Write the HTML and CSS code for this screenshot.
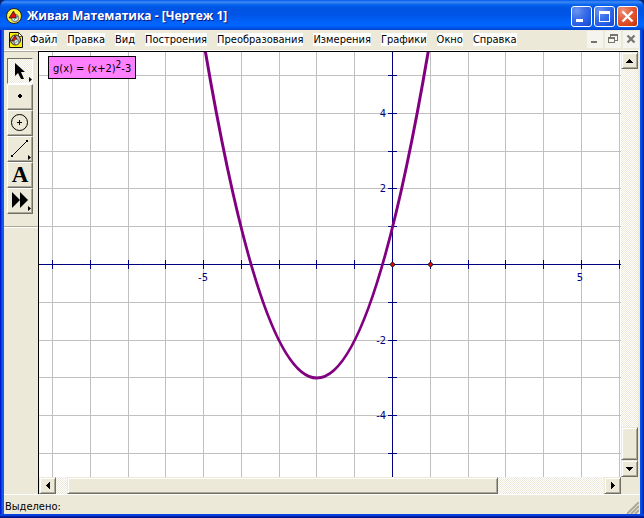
FILE: index.html
```html
<!DOCTYPE html>
<html lang="ru">
<head>
<meta charset="utf-8">
<title>Живая Математика - [Чертеж 1]</title>
<link rel="stylesheet" href="styles.css">
</head>
<body>
<div class="window">
  <header class="titlebar">
    <svg class="app-icon" width="16" height="16" viewBox="0 0 16 16" aria-hidden="true">
      <circle cx="8" cy="8" r="7.5" fill="#fff23a" stroke="#222"/>
      <circle cx="9" cy="10" r="3.500" fill="#fff" stroke="#888" stroke-width="1.500"/>
      <path d="M3 10L7.500 3L11 10Z" fill="#e01010" stroke="#111" stroke-width=".7"/>
      <path d="M8 12L12 8" stroke="#2a8" stroke-width="1"/>
    </svg>
    <h1 class="title">Живая Математика - [Чертеж 1]</h1>
    <div class="controls">
      <button class="control" aria-label="Свернуть"><svg width="19" height="19"><path d="M4 12h7v3h-7z" fill="#fff"/></svg></button>
      <button class="control" aria-label="Развернуть"><svg width="19" height="19"><path d="M4 4h11v11h-11zM5 7v7h9v-7z" fill="#fff" fill-rule="evenodd"/></svg></button>
      <button class="control close" aria-label="Закрыть"><svg width="19" height="19"><path d="M4.500 4.500L14.500 14.500M14.500 4.500L4.500 14.500" stroke="#fff" stroke-width="2.400"/></svg></button>
    </div>
  </header>
  <div class="client">
    <nav class="menubar">
      <svg class="doc-icon" width="16" height="18" viewBox="0 0 16 18" aria-hidden="true">
        <path d="M1.500 1.500h9l4 4v11h-13z" fill="#fff200" stroke="#111"/>
        <path d="M10.500 1.500v4h4z" fill="#fff" stroke="#111" stroke-width=".7"/>
        <circle cx="7.500" cy="9" r="5" fill="#bbb" stroke="#222"/>
        <path d="M3.500 10L7 4.500L10 10Z" fill="#e01010" stroke="#111" stroke-width=".6"/>
        <circle cx="8.500" cy="11" r="2.500" fill="#eee" stroke="#666"/>
        <path d="M7.500 12L10 9.500" stroke="#2a8"/>
      </svg>
      <a href="#">Файл</a><a href="#">Правка</a><a href="#">Вид</a><a href="#">Построения</a><a href="#">Преобразования</a><a href="#">Измерения</a><a href="#">Графики</a><a href="#">Окно</a><a href="#">Справка</a>
      <div class="doc-controls">
        <button aria-label="Свернуть чертеж"><svg width="16" height="17"><path d="M4 10h6v2h-6z" fill="#77766d"/></svg></button>
        <button aria-label="Восстановить чертеж"><svg width="16" height="17"><path d="M5 3h8v7h-3v-1h2v-4h-6v1h-1zM3 6h7v6h-7zM4 8v3h5v-3z" fill="#77766d" fill-rule="evenodd"/></svg></button>
        <button aria-label="Закрыть чертеж"><svg width="16" height="17"><path d="M4.500 4.500L11.500 11.500M11.500 4.500L4.500 11.500" stroke="#77766d" stroke-width="2.200"/></svg></button>
      </div>
    </nav>
    <main class="workspace">
      <div class="toolbox">
        <button class="tool active" aria-label="Стрелка"><svg width="24" height="24"><path d="M7 4v13l3-3l3 6h3l-3-7h4z"/><path d="M21 18v5l3-2.500z"/></svg></button>
        <button class="tool" aria-label="Точка"><svg width="24" height="24"><path d="M11 9h2v1h1v2h-1v1h-2v-1h-1v-2h1z"/></svg></button>
        <button class="tool" aria-label="Окружность"><svg width="24" height="24"><circle cx="11.500" cy="11.500" r="8" fill="none" stroke="#000"/><path d="M9 11h5v1h-5zM11 9h1v5h-1z"/></svg></button>
        <button class="tool" aria-label="Отрезок"><svg width="24" height="24"><path d="M4 19L19 4" stroke="#000"/><path d="M3 18h2v2h-2zM18 3h2v2h-2zM20 18v5l3-2.500z"/></svg></button>
        <button class="tool letter" aria-label="Текст">A</button>
        <button class="tool" aria-label="Инструменты"><svg width="24" height="24"><path d="M4 3v16l8-8zM12 3v16l8-8zM20 17v5l3-2.500z"/></svg></button>
      </div>
      <div class="document">
        <div class="sketch">
          <svg class="plot" width="100%" height="100%" role="img" aria-label="График параболы">
            <path class="grid" d="M13.500 0V1000M51.500 0V1000M89.500 0V1000M126.500 0V1000M164.500 0V1000M202.500 0V1000M240.500 0V1000M277.500 0V1000M315.500 0V1000M391.500 0V1000M429.500 0V1000M466.500 0V1000M504.500 0V1000M542.500 0V1000M580.500 0V1000M0 23.500H2000M0 61.500H2000M0 99.500H2000M0 136.500H2000M0 174.500H2000M0 250.500H2000M0 288.500H2000M0 325.500H2000M0 363.500H2000M0 401.500H2000"/>
            <path class="axis" d="M353.500 0V1000M0 212.500H2000M13.500 208v9M51.500 208v9M89.500 208v9M126.500 208v9M164.500 208v9M202.500 208v9M240.500 208v9M277.500 208v9M315.500 208v9M391.500 208v9M429.500 208v9M466.500 208v9M504.500 208v9M542.500 208v9M580.500 208v9M349 23.500h9M349 61.500h9M349 99.500h9M349 136.500h9M349 174.500h9M349 250.500h9M349 288.500h9M349 325.500h9M349 363.500h9M349 401.500h9"/>
            <path class="curve" d="M164 -14.500Q277.800 666.500 391.600 -14.500"/>
            <circle class="point" cx="353.500" cy="212.500" r="2"/>
            <circle class="point" cx="391.500" cy="212.500" r="2"/>
            <g class="scale">
              <text x="164" y="229" text-anchor="middle">-5</text>
              <text x="541" y="229" text-anchor="middle">5</text>
              <text x="347" y="65" text-anchor="end">4</text>
              <text x="347" y="140" text-anchor="end">2</text>
              <text x="347" y="292" text-anchor="end">-2</text>
              <text x="347" y="367" text-anchor="end">-4</text>
            </g>
          </svg>
          <div class="formula">g(x) = (x+2)<sup>2</sup>-3</div>
        </div>
        <div class="scroll vertical">
          <button aria-label="Вверх"><svg width="7" height="4"><path d="M3 0h1v1h1v1h1v1h1v1h-7v-1h1v-1h1v-1h1z"/></svg></button>
          <span class="thumb"></span>
          <button aria-label="Вниз"><svg width="7" height="4"><path d="M0 0h7v1h-1v1h-1v1h-1v1h-1v-1h-1v-1h-1v-1h-1z"/></svg></button>
        </div>
        <div class="scroll horizontal">
          <button aria-label="Влево"><svg width="4" height="7"><path d="M0 3h1v-1h1v-1h1v-1h1v7h-1v-1h-1v-1h-1v-1h-1z"/></svg></button>
          <span class="thumb"></span>
          <button aria-label="Вправо"><svg width="4" height="7"><path d="M0 0h1v1h1v1h1v1h1v1h-1v1h-1v1h-1v1h-1z"/></svg></button>
        </div>
      </div>
    </main>
    <footer class="status">Выделено:
      <svg class="grip" width="12" height="12"><path d="M0 12L12 0M4 12L12 4M8 12L12 8" stroke="#aca899" stroke-width="2"/></svg>
    </footer>
  </div>
</div>
</body>
</html>
```
FILE: styles.css
```css
* { box-sizing: border-box; }
body { margin: 0; background: #0a246a; font: 11px/13px "DejaVu Sans Condensed", "Noto Sans", sans-serif; color: #000; }
button { padding: 0; border: 0; font: inherit; color: inherit; }
svg { display: block; }
.window {
  display: flex; flex-direction: column; height: 100vh;
  padding: 0 4px 4px; border-radius: 7px 7px 0 0;
  background: linear-gradient(90deg, #0019cf 0, #0019cf 1px, #0831d9 1px, #166aee 3px, #0855dd 4px, #0855dd calc(100% - 4px), #0450e8 calc(100% - 3px), #0030c8 calc(100% - 1px), #00138c 100%);
  box-shadow: inset 0 -1px #00138c, inset 0 -2px #001ea0, inset 0 -4px #0842dd;
}
.titlebar {
  display: flex; align-items: center; flex: none; height: 30px;
  margin: 0 -4px; padding: 2px 6px 0; border-radius: 7px 7px 0 0;
  background: linear-gradient(#0058ee 0, #3f8cf3 2px, #2a79f0 3px, #0262ee 5px, #0054e4 8px, #0055e6 15px, #0060f8 21px, #0066ff 25px, #005bf0 27px, #0043cf 30px);
}
.title { flex: 1; margin: 0 0 0 5px; font: bold 12px/16px "Open Sans", "Noto Sans", sans-serif; color: #fff; text-shadow: 1px 1px #0a1883; white-space: nowrap; }
.controls { display: flex; gap: 2px; }
.control {
  width: 21px; height: 21px; border: 1px solid #fff; border-radius: 3px;
  background: radial-gradient(circle at 25% 20%, #6b95f0, #3b6fe8 40%, #2158e4 75%, #1643c0);
}
.control.close { background: radial-gradient(circle at 25% 20%, #ec9478, #e35f3f 40%, #da4419 75%, #b3300d); }
.client { display: flex; flex-direction: column; flex: 1; min-height: 0; background: #ece9d8; }
.menubar { display: flex; align-items: center; gap: 10px; flex: none; height: 20px; padding: 0 1px 1px 4px; }
.menubar a { background: #fff; color: #000; text-decoration: none; white-space: nowrap; }
.doc-icon { margin-right: -4px; }
.doc-controls { display: flex; gap: 2px; margin-left: auto; }
.doc-controls button { width: 16px; height: 17px; background: #f5f4ee; }
.workspace { display: flex; flex: 1; min-height: 0; border-top: 1px solid #fff; }
.toolbox { flex: none; width: 34px; padding: 6px 3px 0; border-top: 1px solid #aca899; background: linear-gradient(#aca899, #aca899) 0 174px / 34px 1px no-repeat, linear-gradient(#fff, #fff) 0 175px / 34px 1px no-repeat; }
.tool { display: block; width: 26px; height: 26px; border: 1px solid; border-color: #fff #716f64 #716f64 #fff; background: #ece9d8; box-shadow: inset -1px -1px #aca899; }
.tool.active { border-color: #716f64 #fff #fff #716f64; background: repeating-conic-gradient(#fff 0 25%, #ece9d8 0 50%) 0 0 / 2px 2px; box-shadow: none; }
.letter { font: bold 23px/24px "Liberation Serif", serif; }
.document { display: grid; flex: 1; grid-template: minmax(0, 1fr) 17px / minmax(0, 1fr) 17px; min-width: 0; margin-right: 2px; border-top: 1px solid #000; border-left: 1px solid #000; }
.sketch { position: relative; overflow: hidden; background: #fff; }
.plot { position: absolute; inset: 0; }
.grid { stroke: #c0c0c0; fill: none; shape-rendering: crispEdges; }
.axis { stroke: #000080; fill: none; shape-rendering: crispEdges; }
.curve { stroke: #800080; stroke-width: 3px; fill: none; }
.point { fill: #f00; stroke: #222; }
.scale { fill: #000080; font-family: "DejaVu Sans Condensed", sans-serif; font-size: 11px; }
.formula { position: absolute; left: 9px; top: 4px; height: 23px; padding: 4px 4px 0; border: 1px solid #000; background: #ff80ff; font: 11px/16px "DejaVu Sans Condensed", sans-serif; white-space: nowrap; }
.formula sup { font-size: 10px; line-height: 0; vertical-align: 4px; }
.scroll { display: flex; background: repeating-conic-gradient(#fff 0 25%, #ece9d8 0 50%) 0 0 / 2px 2px; }
.scroll button, .thumb { display: grid; place-items: center; background: #ece9d8; border: 1px solid; border-color: #ece9d8 #716f64 #716f64 #ece9d8; box-shadow: inset 1px 1px #fff, inset -1px -1px #aca899; }
.scroll button { flex: none; width: 17px; height: 17px; }
.vertical { flex-direction: column; }
.vertical .thumb { height: 33px; margin-top: auto; }
.horizontal .thumb { width: 74%; margin: 0 auto 0 11px; }
.status { display: flex; flex: none; justify-content: space-between; height: 20px; padding: 5px 1px 0; border-top: 1px solid #fff; }
.grip { align-self: flex-end; }
```
